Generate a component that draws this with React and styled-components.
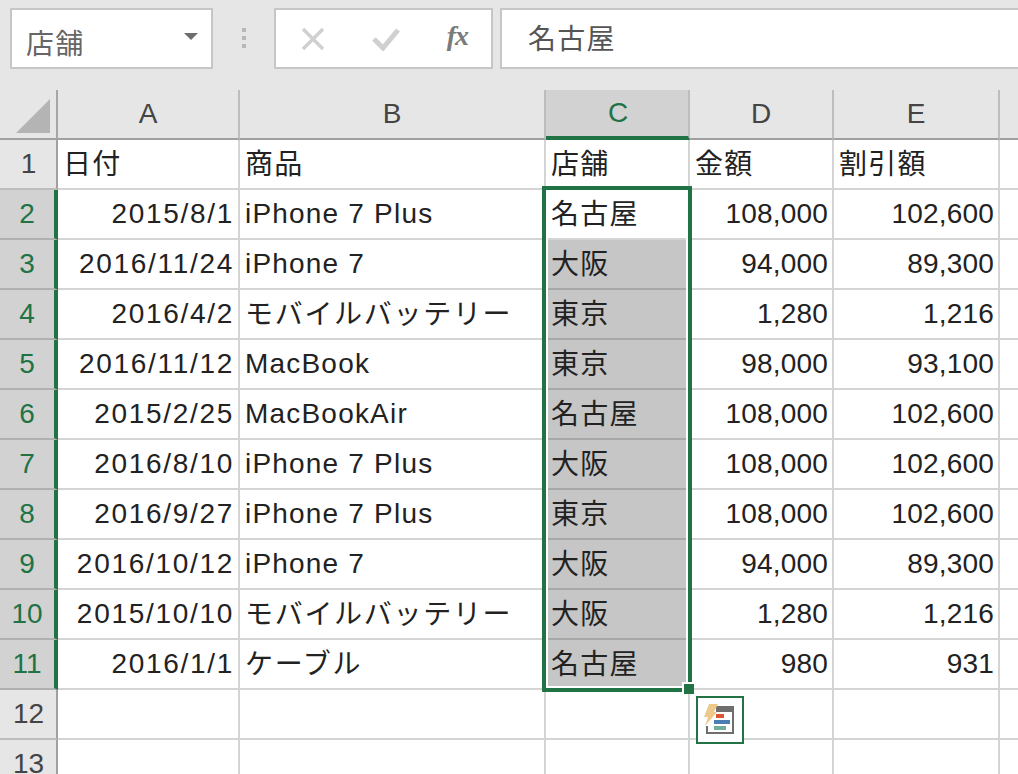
import React from "react";
import styled, { createGlobalStyle } from "styled-components";

const GREEN = "#217346";
const FONT = '"Liberation Sans", "Noto Sans CJK JP", sans-serif';
const COLUMNS = "58px 182px 306px 144px 144px 166px 18px";

const Global = createGlobalStyle`
  html, body {
    margin: 0;
    padding: 0;
    height: 100%;
    overflow: hidden;
    background: #fff;
  }
`;

const Page = styled.div`
  position: relative;
  width: 1018px;
  height: 774px;
  overflow: hidden;
  font-family: ${FONT};
`;

const FormulaBar = styled.div`
  display: flex;
  align-items: flex-start;
  height: 90px;
  padding: 8px 0 0 10px;
  box-sizing: border-box;
  background: #e6e6e6;
`;

const Box = styled.div`
  display: flex;
  align-items: center;
  height: 61px;
  box-sizing: border-box;
  background: #fff;
  border: 2px solid #c6c6c6;
`;

const NameBox = styled(Box)`
  width: 203px;
  padding: 6px 13px 0 14px;
  justify-content: space-between;
  color: #666;
  font-size: 28px;
  letter-spacing: 1.2px;
`;

const Caret = styled.span`
  width: 0;
  height: 0;
  margin-bottom: 10px;
  border-left: 7px solid transparent;
  border-right: 7px solid transparent;
  border-top: 7px solid #6e6e6e;
`;

const Grip = styled.div`
  display: flex;
  flex-direction: column;
  gap: 4px;
  width: 61px;
  padding-top: 20px;
  align-items: center;
  span {
    width: 4px;
    height: 4px;
    background: #b8b8b8;
  }
`;

const ButtonsBox = styled(Box)`
  width: 219px;
  padding: 0 23px 0 25px;
  justify-content: space-between;
  svg {
    display: block;
  }
`;

const Fx = styled.span`
  margin-bottom: 6px;
  color: #7a7a7a;
  font-family: "Liberation Serif", serif;
  font-style: italic;
  font-weight: 700;
  font-size: 28px;
  letter-spacing: -1px;
`;

const FormulaInput = styled(Box)`
  flex: 1;
  margin-left: 7px;
  padding: 0 0 4px 26px;
  border-right: 0;
  color: #555;
  font-size: 28px;
  letter-spacing: 1.2px;
`;

const Sheet = styled.div`
  display: grid;
  grid-template-columns: ${COLUMNS};
  grid-auto-rows: 50px;
`;

const Corner = styled.div`
  box-sizing: border-box;
  background: #e6e6e6;
  border-right: 2px solid #a6a6a6;
  border-bottom: 2px solid #a0a0a0;
  padding: 9px 0 0 16px;
  svg {
    display: block;
  }
`;

const ColHead = styled.div`
  display: flex;
  align-items: center;
  justify-content: center;
  box-sizing: border-box;
  padding-left: ${(p) => (p.$active ? "2px" : "0")};
  font-size: 28px;
  background: ${(p) => (p.$active ? "#d2d2d2" : "#e6e6e6")};
  color: ${(p) => (p.$active ? GREEN : "#444")};
  border-right: ${(p) => (p.$blank ? "0" : "2px solid #bdbdbd")};
  border-bottom: ${(p) => (p.$active ? `4px solid ${GREEN}` : "2px solid #a0a0a0")};
`;

const RowHead = styled.div`
  display: flex;
  align-items: center;
  justify-content: center;
  box-sizing: border-box;
  padding-left: ${(p) => (p.$active ? "0" : "1px")};
  font-size: 28px;
  background: ${(p) => (p.$active ? "#d2d2d2" : "#e6e6e6")};
  color: ${(p) => (p.$active ? GREEN : "#444")};
  border-right: ${(p) => (p.$active ? `4px solid ${GREEN}` : "2px solid #a0a0a0")};
  border-bottom: 2px solid ${(p) => (p.$active ? "#b0b0b0" : "#bdbdbd")};
`;

const Cell = styled.div`
  display: flex;
  align-items: center;
  justify-content: ${(p) => (p.$right ? "flex-end" : "flex-start")};
  box-sizing: border-box;
  padding: 0 ${(p) => (p.$right ? "4px" : "0")} ${(p) => (p.$wide ? "5px" : "0")} ${(p) => (p.$right ? "0" : "5px")};
  font-size: 28px;
  letter-spacing: ${(p) => p.$spacing || "1.2px"};
  white-space: nowrap;
  color: #222;
  background: ${(p) => (p.$selected ? "#c6c6c6" : "#fff")};
  border-right: 2px solid #d4d4d4;
  border-bottom: 2px solid ${(p) => (p.$selected ? "#a8a8a8" : "#d4d4d4")};
`;

const Blank = styled.div`
  box-sizing: border-box;
  background: #fff;
  border-bottom: 2px solid #d4d4d4;
`;

const Selection = styled.div`
  position: absolute;
  left: 542px;
  top: 186px;
  width: 150px;
  height: 506px;
  box-sizing: border-box;
  border: 4px solid ${GREEN};
  box-shadow: inset 0 0 0 2px #fff;
  pointer-events: none;
`;

const FillHandle = styled.div`
  position: absolute;
  left: 682px;
  top: 682px;
  width: 10px;
  height: 10px;
  border-left: 2px solid #fff;
  border-top: 2px solid #fff;
  background: ${GREEN};
`;

const QuickAnalysis = styled.div`
  position: absolute;
  left: 696px;
  top: 696px;
  width: 48px;
  height: 48px;
  box-sizing: border-box;
  border: 2px solid ${GREEN};
  background: #fff;
  svg {
    display: block;
  }
`;

const HEADS = ["A", "B", "C", "D", "E"];

const ROWS = [
  ["日付", "商品", "店舗", "金額", "割引額"],
  ["2015/8/1", "iPhone 7 Plus", "名古屋", "108,000", "102,600"],
  ["2016/11/24", "iPhone 7", "大阪", "94,000", "89,300"],
  ["2016/4/2", "モバイルバッテリー", "東京", "1,280", "1,216"],
  ["2016/11/12", "MacBook", "東京", "98,000", "93,100"],
  ["2015/2/25", "MacBookAir", "名古屋", "108,000", "102,600"],
  ["2016/8/10", "iPhone 7 Plus", "大阪", "108,000", "102,600"],
  ["2016/9/27", "iPhone 7 Plus", "東京", "108,000", "102,600"],
  ["2016/10/12", "iPhone 7", "大阪", "94,000", "89,300"],
  ["2015/10/10", "モバイルバッテリー", "大阪", "1,280", "1,216"],
  ["2016/1/1", "ケーブル", "名古屋", "980", "931"],
  ["", "", "", "", ""],
  ["", "", "", "", ""],
];

// kana and kanji sit a little higher than the latin text in the same row
const isWide = (text) => /[^\x00-\x7f]/.test(text);

const CrossIcon = () => (
  <svg width="24" height="24" viewBox="0 0 24 24">
    <path d="M2 2 L22 22 M22 2 L2 22" stroke="#d0d0d0" strokeWidth="3.4" fill="none" />
  </svg>
);

const CheckIcon = () => (
  <svg width="28" height="24" viewBox="0 0 28 24">
    <path d="M2 12 L11 21 L26 3" stroke="#d0d0d0" strokeWidth="5" fill="none" />
  </svg>
);

const CornerIcon = () => (
  <svg width="34" height="34" viewBox="0 0 34 34">
    <path d="M34 0 V34 H0 Z" fill="#b4b4b4" />
  </svg>
);

const QuickIcon = () => (
  <svg width="44" height="44" viewBox="0 0 44 44">
    <path d="M18 8 H36 V36 H8 V28 H10 V34 H34 V14 H18 Z" fill="#6e6e6e" />
    <rect x="18" y="16" width="8" height="4" fill="#dc5530" />
    <rect x="16" y="22" width="16" height="4" fill="#4a7eb5" />
    <rect x="16" y="28" width="12" height="4" fill="#70ad9c" />
    <path d="M11 6 H20 L16 14 H19 L7 28 L10 19 H6 Z" fill="#eec98c" />
  </svg>
);

const App = () => (
  <Page>
    <Global />
    <FormulaBar>
      <NameBox>
        店舗
        <Caret />
      </NameBox>
      <Grip>
        <span />
        <span />
        <span />
      </Grip>
      <ButtonsBox>
        <CrossIcon />
        <CheckIcon />
        <Fx>fx</Fx>
      </ButtonsBox>
      <FormulaInput>名古屋</FormulaInput>
    </FormulaBar>
    <Sheet>
      <Corner>
        <CornerIcon />
      </Corner>
      {HEADS.map((h) => (
        <ColHead key={h} $active={h === "C"}>
          {h}
        </ColHead>
      ))}
      <ColHead $blank />
      {ROWS.map((row, i) => (
        <React.Fragment key={i}>
          <RowHead $active={i >= 1 && i <= 10}>{i + 1}</RowHead>
          <Cell $right={i > 0} $spacing={i > 0 ? "1.7px" : undefined} $wide={isWide(row[0])}>
            {row[0]}
          </Cell>
          <Cell $spacing={isWide(row[1]) && i > 0 ? "1.7px" : undefined} $wide={isWide(row[1])}>
            {row[1]}
          </Cell>
          <Cell $selected={i >= 2 && i <= 10} $wide={isWide(row[2])}>
            {row[2]}
          </Cell>
          <Cell $right={i > 0} $spacing={i > 0 ? "0.2px" : undefined} $wide={isWide(row[3])}>
            {row[3]}
          </Cell>
          <Cell $right={i > 0} $spacing={i > 0 ? "0.2px" : undefined} $wide={isWide(row[4])}>
            {row[4]}
          </Cell>
          <Blank />
        </React.Fragment>
      ))}
    </Sheet>
    <Selection />
    <FillHandle />
    <QuickAnalysis>
      <QuickIcon />
    </QuickAnalysis>
  </Page>
);

export default App;
